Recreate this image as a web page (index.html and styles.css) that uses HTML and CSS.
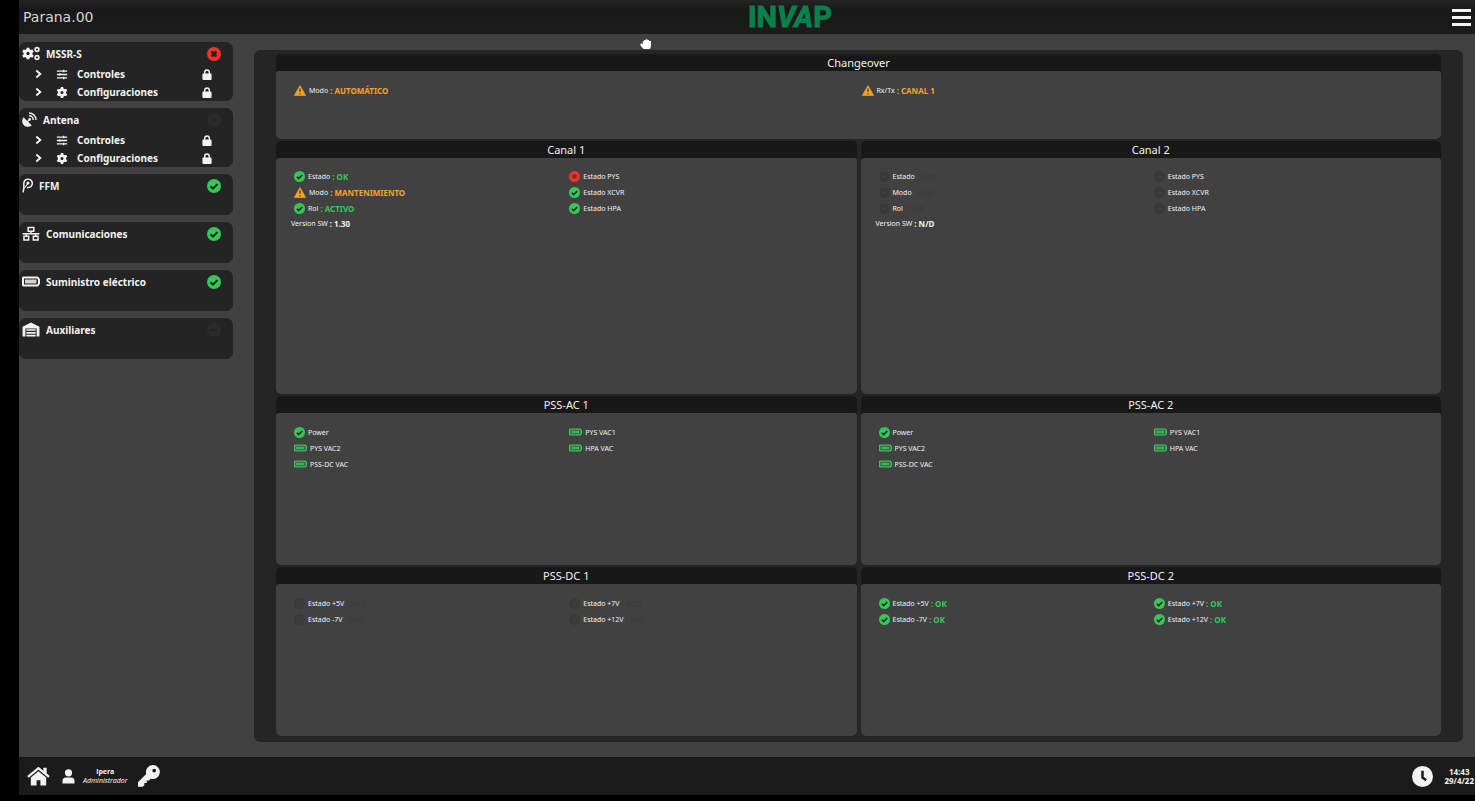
FILE: index.html
```html
<!DOCTYPE html>
<html lang="es">
<head>
<meta charset="utf-8">
<meta name="viewport" content="width=device-width, initial-scale=1">
<title>Parana.00</title>
<link rel="stylesheet" href="styles.css">
</head>
<body>
<svg class="sprite" aria-hidden="true">
  <symbol id="check" viewBox="0 0 16 16"><circle cx="8" cy="8" r="8" fill="#36c759"/><path d="M4 8.300l2.800 2.800L12 5.700" fill="none" stroke="#242425" stroke-width="2.200"/></symbol>
  <symbol id="error" viewBox="0 0 16 16"><circle cx="8" cy="8" r="8" fill="#fa3228"/><path d="M5.200 5.200l5.600 5.600M10.800 5.200l-5.600 5.600" stroke="#2b2020" stroke-width="3"/></symbol>
  <symbol id="stop" viewBox="0 0 16 16"><circle cx="8" cy="8" r="8" fill="#f03228"/><rect x="5" y="5" width="6" height="6" rx="1" fill="#70302d"/></symbol>
  <symbol id="off" viewBox="0 0 16 16"><circle cx="8" cy="8" r="8" fill="#3a3a3b"/><path d="M5 8h6" stroke="#424142" stroke-width="2"/></symbol>
  <symbol id="off-dark" viewBox="0 0 16 16"><circle cx="8" cy="8" r="8" fill="#2b2b2c"/><path d="M4 8h8" stroke="#252526" stroke-width="2"/></symbol>
  <symbol id="warn" viewBox="0 0 18 16"><path d="M9 .5L17.500 15.500H.5z" fill="#f2a32c" stroke="#f2a32c" stroke-linejoin="round"/><path d="M9 5v5M9 12v2" stroke="#4a3b22" stroke-width="2"/></symbol>
  <symbol id="battery" viewBox="0 0 18 10"><path d="M1.500 1h14l1.500 2v4l-1.500 2h-14L1 8.500v-7z" fill="none" stroke="currentColor" stroke-width="2"/><rect x="3" y="3" width="11.500" height="4" fill="currentColor" opacity=".85"/></symbol>
  <symbol id="gear" viewBox="0 0 16 16"><g fill="currentColor"><path fill-rule="evenodd" d="M8 2a6 6 0 1 0 0 12A6 6 0 0 0 8 2zm0 3.800a2.200 2.200 0 1 1 0 4.400 2.200 2.200 0 0 1 0-4.400z"/><path d="M6.300 0h3.400l.6 3.500H5.700zM6.300 16h3.400l.6-3.500H5.700z"/><path d="M.3 5.500l1.800-3 3.300 1.200L3 7.500zM15.700 5.500l-1.800-3-3.300 1.200L13 7.500zM.3 10.500l1.800 3 3.300-1.200L3 8.500zM15.700 10.500l-1.800 3-3.300-1.200L13 8.500z"/></g></symbol>
  <symbol id="gears" viewBox="0 0 18 14"><use href="#gear" x="0" y="1" width="12" height="12"/><g fill="none" stroke="currentColor" stroke-width="1.600"><circle cx="15" cy="3" r="1.900"/><circle cx="15" cy="11" r="1.900"/></g></symbol>
  <symbol id="dish" viewBox="0 0 16 16"><path d="M1.500 5.500c-2 3-1.500 6.500.5 8.500s5.500 2.500 8.500.5L6.500 10.500l1.300-1.300a1.400 1.400 0 1 0-1-1L5.500 9.500z" fill="currentColor"/><path d="M7.500 1c4 0 7.500 3.500 7.500 7.500M7.500 4c2.500 0 4.500 2 4.500 4.500" fill="none" stroke="currentColor" stroke-width="1.600"/></symbol>
  <symbol id="probe" viewBox="0 0 12 16"><path d="M1.300 15.500L2 10V5.500a4.600 4.600 0 1 1 3.500 4.600" fill="none" stroke="currentColor" stroke-width="1.600"/><path d="M2.500 11L6.500 5.500" stroke="currentColor" stroke-width="1.200"/><circle cx="6.500" cy="5.300" r="1.700" fill="currentColor"/></symbol>
  <symbol id="network" viewBox="0 0 18 16"><path d="M6 1.500h6v4H6zM1.500 11h5v4h-5zM11.500 11h5v4h-5zM9 5.500v2.500M0 8.200h18M4 8v3M14 8v3" fill="none" stroke="currentColor" stroke-width="1.600"/></symbol>
  <symbol id="warehouse" viewBox="0 0 18 16"><path fill-rule="evenodd" fill="currentColor" d="M0 5L9 .5 18 5v10.500h-3V7H3v8.500H0z"/><path d="M4 8.500h10M4 11.500h10M4 14.500h10" stroke="currentColor" stroke-width="1.800"/></symbol>
  <symbol id="sliders" viewBox="0 0 14 12"><path d="M1 2h12M1 6h12M1 10h12M9 .5v3M4.500 4.500v3M9 8.500v3" fill="none" stroke="currentColor" stroke-width="1.500"/></symbol>
  <symbol id="chevron" viewBox="0 0 8 10"><path d="M1.500 1L6 5 1.500 9" fill="none" stroke="currentColor" stroke-width="2.200"/></symbol>
  <symbol id="lock" viewBox="0 0 10 12"><rect y="5" width="10" height="7" rx="1" fill="currentColor"/><path d="M2.500 6V3.500a2.500 2.500 0 0 1 5 0V6" fill="none" stroke="currentColor" stroke-width="1.600"/></symbol>
  <symbol id="home" viewBox="0 0 24 20"><path d="M1 11L12 1.800 23 11" fill="none" stroke="currentColor" stroke-width="2.400"/><path d="M17 1.500h3.500V8L17 5z" fill="currentColor"/><path d="M4 11.500l8-6.500 8 6.500V20h-6v-5.500h-4V20H4z" fill="currentColor"/></symbol>
  <symbol id="user" viewBox="0 0 14 16"><circle cx="7" cy="4" r="3.900" fill="currentColor"/><path d="M.5 15.500V13c0-2.500 1.500-3.800 3.500-3.800h6c2 0 3.500 1.300 3.500 3.800v2.500z" fill="currentColor"/></symbol>
  <symbol id="key" viewBox="0 0 22 22"><path fill="currentColor" fill-rule="evenodd" d="M14.800 0a7 7 0 1 1-2 13.700L11 15.600H8.700v2.300H6.300v2.400l-1.500 1.500H0v-4.600l8.200-8.100A7 7 0 0 1 14.800 0zm1.400 3.700a1.900 1.900 0 1 0 0 3.800 1.900 1.900 0 0 0 0-3.800z"/></symbol>
  <symbol id="clock" viewBox="0 0 20 20"><circle cx="10" cy="10" r="10" fill="currentColor"/><path d="M10 4.500V11l3.500 2.500" fill="none" stroke="#1b1b1c" stroke-width="2.400"/></symbol>
</svg>

<div class="app">
  <header class="topbar">
    <h1 class="site">Parana.00</h1>
    <div class="logo">IN<i>VA</i>P</div>
    <button class="menu" aria-label="Menú"><svg class="i-menu" viewBox="0 0 19 17"><path d="M0 1.500h19M0 8.500h19M0 15.500h19" stroke="#f4f4f0" stroke-width="3"/></svg></button>
  </header>

  <main class="content">
    <nav class="sidebar">
      <section class="unit">
        <h2 class="unit-title"><svg class="i18"><use href="#gears"/></svg>MSSR-S<svg class="state"><use href="#error"/></svg></h2>
        <button class="entry"><svg class="i-chev"><use href="#chevron"/></svg><svg class="i12"><use href="#sliders"/></svg><span>Controles</span><svg class="i-lock"><use href="#lock"/></svg></button>
        <button class="entry"><svg class="i-chev"><use href="#chevron"/></svg><svg class="i12"><use href="#gear"/></svg><span>Configuraciones</span><svg class="i-lock"><use href="#lock"/></svg></button>
      </section>
      <section class="unit">
        <h2 class="unit-title"><svg class="i15"><use href="#dish"/></svg>Antena<svg class="state"><use href="#off-dark"/></svg></h2>
        <button class="entry"><svg class="i-chev"><use href="#chevron"/></svg><svg class="i12"><use href="#sliders"/></svg><span>Controles</span><svg class="i-lock"><use href="#lock"/></svg></button>
        <button class="entry"><svg class="i-chev"><use href="#chevron"/></svg><svg class="i12"><use href="#gear"/></svg><span>Configuraciones</span><svg class="i-lock"><use href="#lock"/></svg></button>
      </section>
      <section class="unit"><h2 class="unit-title"><svg class="i11"><use href="#probe"/></svg>FFM<svg class="state"><use href="#check"/></svg></h2></section>
      <section class="unit"><h2 class="unit-title"><svg class="i18"><use href="#network"/></svg>Comunicaciones<svg class="state"><use href="#check"/></svg></h2></section>
      <section class="unit"><h2 class="unit-title"><svg class="i18"><use href="#battery"/></svg>Suministro eléctrico<svg class="state"><use href="#check"/></svg></h2></section>
      <section class="unit"><h2 class="unit-title"><svg class="i18"><use href="#warehouse"/></svg>Auxiliares<svg class="state"><use href="#off-dark"/></svg></h2></section>
    </nav>

    <div class="panel">
      <section class="card wide">
        <h2 class="card-title">Changeover</h2>
        <div class="card-body">
          <ul class="col"><li class="item"><svg class="warn"><use href="#warn"/></svg>Modo <b class="v amber">: AUTOMÁTICO</b></li></ul>
          <ul class="col"><li class="item"><svg class="warn"><use href="#warn"/></svg>Rx/Tx <b class="v amber">: CANAL 1</b></li></ul>
        </div>
      </section>

      <section class="card">
        <h2 class="card-title">Canal 1</h2>
        <div class="card-body">
          <ul class="col">
            <li class="item"><svg class="dot"><use href="#check"/></svg>Estado <b class="v green">: OK</b></li>
            <li class="item"><svg class="warn"><use href="#warn"/></svg>Modo <b class="v amber">: MANTENIMIENTO</b></li>
            <li class="item"><svg class="dot"><use href="#check"/></svg>Rol <b class="v green">: ACTIVO</b></li>
            <li class="item plain">Version SW <b class="v">: 1.30</b></li>
          </ul>
          <ul class="col">
            <li class="item"><svg class="dot"><use href="#stop"/></svg>Estado PYS</li>
            <li class="item"><svg class="dot"><use href="#check"/></svg>Estado XCVR</li>
            <li class="item"><svg class="dot"><use href="#check"/></svg>Estado HPA</li>
          </ul>
        </div>
      </section>
      <section class="card">
        <h2 class="card-title">Canal 2</h2>
        <div class="card-body">
          <ul class="col">
            <li class="item"><svg class="dot"><use href="#off"/></svg>Estado <b class="v dim">: N/D</b></li>
            <li class="item"><svg class="dot"><use href="#off"/></svg>Modo <b class="v dim">: N/D</b></li>
            <li class="item"><svg class="dot"><use href="#off"/></svg>Rol <b class="v dim">: N/D</b></li>
            <li class="item plain">Version SW <b class="v">: N/D</b></li>
          </ul>
          <ul class="col">
            <li class="item"><svg class="dot"><use href="#off"/></svg>Estado PYS</li>
            <li class="item"><svg class="dot"><use href="#off"/></svg>Estado XCVR</li>
            <li class="item"><svg class="dot"><use href="#off"/></svg>Estado HPA</li>
          </ul>
        </div>
      </section>

      <section class="card">
        <h2 class="card-title">PSS-AC 1</h2>
        <div class="card-body">
          <ul class="col">
            <li class="item"><svg class="dot"><use href="#check"/></svg>Power</li>
            <li class="item"><svg class="bat"><use href="#battery"/></svg>PYS VAC2</li>
            <li class="item"><svg class="bat"><use href="#battery"/></svg>PSS-DC VAC</li>
          </ul>
          <ul class="col">
            <li class="item"><svg class="bat"><use href="#battery"/></svg>PYS VAC1</li>
            <li class="item"><svg class="bat"><use href="#battery"/></svg>HPA VAC</li>
          </ul>
        </div>
      </section>
      <section class="card">
        <h2 class="card-title">PSS-AC 2</h2>
        <div class="card-body">
          <ul class="col">
            <li class="item"><svg class="dot"><use href="#check"/></svg>Power</li>
            <li class="item"><svg class="bat"><use href="#battery"/></svg>PYS VAC2</li>
            <li class="item"><svg class="bat"><use href="#battery"/></svg>PSS-DC VAC</li>
          </ul>
          <ul class="col">
            <li class="item"><svg class="bat"><use href="#battery"/></svg>PYS VAC1</li>
            <li class="item"><svg class="bat"><use href="#battery"/></svg>HPA VAC</li>
          </ul>
        </div>
      </section>

      <section class="card">
        <h2 class="card-title">PSS-DC 1</h2>
        <div class="card-body">
          <ul class="col">
            <li class="item"><svg class="dot"><use href="#off"/></svg>Estado +5V <b class="v dim">: N/D</b></li>
            <li class="item"><svg class="dot"><use href="#off"/></svg>Estado -7V <b class="v dim">: N/D</b></li>
          </ul>
          <ul class="col">
            <li class="item"><svg class="dot"><use href="#off"/></svg>Estado +7V <b class="v dim">: N/D</b></li>
            <li class="item"><svg class="dot"><use href="#off"/></svg>Estado +12V <b class="v dim">: N/D</b></li>
          </ul>
        </div>
      </section>
      <section class="card">
        <h2 class="card-title">PSS-DC 2</h2>
        <div class="card-body">
          <ul class="col">
            <li class="item"><svg class="dot"><use href="#check"/></svg>Estado +5V <b class="v green">: OK</b></li>
            <li class="item"><svg class="dot"><use href="#check"/></svg>Estado -7V <b class="v green">: OK</b></li>
          </ul>
          <ul class="col">
            <li class="item"><svg class="dot"><use href="#check"/></svg>Estado +7V <b class="v green">: OK</b></li>
            <li class="item"><svg class="dot"><use href="#check"/></svg>Estado +12V <b class="v green">: OK</b></li>
          </ul>
        </div>
      </section>
    </div>
  </main>

  <footer class="bottombar">
    <button class="tool" aria-label="Inicio"><svg class="i-home"><use href="#home"/></svg></button>
    <svg class="i-user"><use href="#user"/></svg>
    <div class="who"><b>lpera</b><i>Administrador</i></div>
    <button class="tool" aria-label="Clave"><svg class="i22"><use href="#key"/></svg></button>
    <svg class="i-clock"><use href="#clock"/></svg>
    <time class="when"><span>14:43</span><span>29/4/22</span></time>
  </footer>

  <svg class="cursor" viewBox="0 0 12 10" aria-hidden="true"><path d="M3.500 10L.5 6.500V4.500h1.300l1 1V2h1.400V1h1.600V.3h1.700V1h1.500v1H11v5l-1 3z" fill="#fff"/></svg>
</div>
</body>
</html>
```

FILE: styles.css
```css
* { box-sizing: border-box; }

body {
  margin: 0;
  background: #000;
  color: #f2f2f2;
  font-family: "Noto Sans", "Open Sans", sans-serif;
}

h1, h2, ul { margin: 0; padding: 0; list-style: none; }

button {
  border: 0;
  padding: 0;
  background: none;
  color: inherit;
  font: inherit;
  cursor: pointer;
}

svg { display: block; flex: none; }
.sprite { position: absolute; width: 0; height: 0; }

.app {
  position: relative;
  display: flex;
  flex-direction: column;
  min-height: 100vh;
  padding: 0 0 6px 19px;
}

.topbar {
  display: grid;
  grid-template-columns: 1fr auto 1fr;
  align-items: center;
  height: 34px;
  padding: 0 4px;
  background: linear-gradient(#242425, #181819 30%, #1c1c1d);
}

.site {
  font: 400 14px/20px "DejaVu Sans", sans-serif;
  color: #d4d4d4;
}

.logo {
  padding-left: 86px;
  font: 700 29px/34px Roboto, "Liberation Sans", sans-serif;
  color: #07824a;
  -webkit-text-stroke: 1px #07824a;
}

.menu { justify-self: end; }
.i-menu { width: 19px; height: 17px; }

.content {
  flex: 1;
  display: flex;
  gap: 21px;
  padding: 8px 12px 15px 0;
  background: #424142;
}

.sidebar {
  width: 214px;
  display: flex;
  flex-direction: column;
  gap: 7px;
}

.unit {
  min-height: 41px;
  background: #242425;
  border-radius: 7px;
}

.unit-title {
  display: flex;
  align-items: center;
  gap: 6px;
  height: 23px;
  padding: 0 12px 0 3px;
  font-size: 10px;
  font-weight: 700;
}

.state { width: 14px; height: 14px; margin-left: auto; }
.i18 { width: 18px; height: 15px; }
.i15 { width: 15px; height: 15px; }
.i11 { width: 11px; height: 15px; }

.entry {
  display: grid;
  grid-template-columns: 21px 21px 1fr 10px;
  align-items: center;
  width: 100%;
  height: 18px;
  padding: 0 21px 0 16px;
  font-size: 10px;
  font-weight: 700;
  text-align: left;
}

.i-chev { width: 7px; height: 10px; }
.i12 { width: 12px; height: 11px; }
.i-lock { width: 10px; height: 11px; }

.panel {
  flex: 1;
  display: grid;
  grid-template-columns: 1fr 1fr;
  grid-template-rows: 5fr 15fr 10fr 10fr;
  gap: 2px 4px;
  margin-top: 8px;
  padding: 4px 22px 6px;
  background: #252526;
  border-radius: 6px;
}

.card {
  display: flex;
  flex-direction: column;
  background: #181819;
  border-radius: 5px;
}
.wide { grid-column: 1 / -1; }

.card-title {
  height: 17px;
  font-size: 11px;
  font-weight: 400;
  line-height: 18px;
  text-align: center;
}

.card-body {
  flex: 1;
  display: grid;
  grid-template-columns: 1fr 1fr;
  padding: 11px 15px;
  background: #424142;
  border-radius: 3px 3px 5px 5px;
}

.item {
  display: flex;
  align-items: center;
  gap: 2px;
  height: 16px;
  padding-left: 3px;
  font-size: 7px;
}
.item svg { margin-right: 1px; }
.plain { height: 14px; padding-left: 0; }

.v { font-size: 8px; }
.green { color: #36c759; }
.amber { color: #f2a32c; }
.dim { color: #3c3c3d; }

.dot { width: 11px; height: 11px; }
.warn { width: 12px; height: 11px; }
.bat { width: 13px; height: 8px; color: #36c759; }

.bottombar {
  display: flex;
  align-items: center;
  height: 38px;
  padding: 0 1px 0 8px;
  background: #1b1b1c;
}

.i-home { width: 23px; height: 20px; }
.i-user { width: 13px; height: 15px; margin-left: 12px; }
.i22 { width: 22px; height: 22px; }
.i-clock { width: 21px; height: 21px; margin-left: auto; }

.who, .when {
  display: flex;
  flex-direction: column;
  align-items: center;
  font-size: 7px;
  line-height: 9px;
}
.who { margin: 0 10px 0 8px; }
.when { margin-left: 11px; font-size: 8px; font-weight: 700; }

.cursor { position: absolute; left: 640px; top: 39px; width: 12px; height: 10px; }
```
